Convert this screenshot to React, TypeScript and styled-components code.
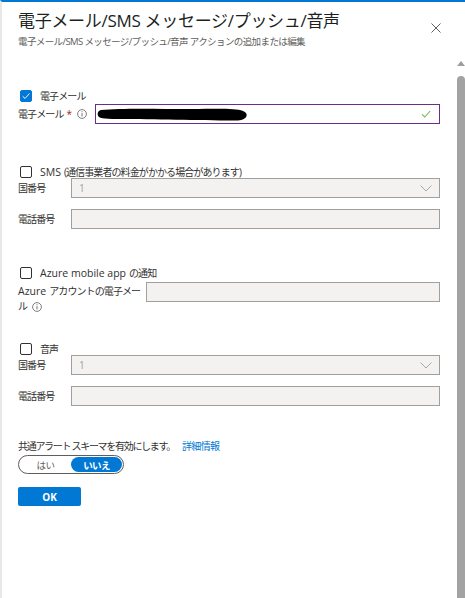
import styled, { createGlobalStyle } from "styled-components";

const GlobalStyle = createGlobalStyle`
  html, body {
    margin: 0;
    padding: 0;
    background: #ffffff;
  }
  body {
    font-family: "Open Sans", "Noto Sans CJK JP", sans-serif;
    color: #323130;
  }
`;

const Panel = styled.div`
  display: flex;
  width: 465px;
  height: 598px;
  box-sizing: border-box;
  border-top: 2px solid #0078d4;
  border-left: 2px solid #e8e8e8;
  overflow: hidden;
`;

const Content = styled.div`
  flex: 1;
  display: flex;
  flex-direction: column;
  padding: 0 17px 0 16px;
`;

const Header = styled.div`
  display: flex;
  justify-content: space-between;
  align-items: flex-start;
  padding-top: 8px;
`;

const Title = styled.h1`
  margin: 0;
  font-size: 17px;
  line-height: 22px;
  font-weight: 400;
  color: #201f1e;
  letter-spacing: -0.3px;
`;

const Subtitle = styled.div`
  font-size: 9.5px;
  line-height: 14px;
  color: #605e5c;
  margin-top: 3px;
  letter-spacing: -0.6px;
`;

const CloseButton = styled.div`
  width: 10px;
  height: 10px;
  margin-top: 6px;
  margin-right: -1px;
`;

const Section = styled.div<{ $top: number }>`
  display: flex;
  flex-direction: column;
  margin-top: ${(p) => p.$top}px;
`;

const CheckRow = styled.label`
  display: flex;
  align-items: center;
  gap: 8px;
  padding-left: 2px;
  font-size: 10px;
  line-height: 14px;
  letter-spacing: -0.9px;
`;

const Latin = styled.span`
  font-size: 10.5px;
  letter-spacing: 0;
  margin-right: 3px;
`;

const Box = styled.span<{ $checked?: boolean }>`
  width: 12px;
  height: 12px;
  box-sizing: border-box;
  border: 1px solid ${(p) => (p.$checked ? "#0078d4" : "#323130")};
  background: ${(p) => (p.$checked ? "#0078d4" : "#ffffff")};
  border-radius: 2px;
  display: flex;
  align-items: center;
  justify-content: center;
`;

const FieldRow = styled.div<{ $label: number; $top: number }>`
  display: grid;
  grid-template-columns: ${(p) => p.$label}px 1fr;
  align-items: center;
  margin-top: ${(p) => p.$top}px;
`;

const FieldRowTop = styled(FieldRow)`
  align-items: start;
`;

const Label = styled.div`
  display: flex;
  align-items: center;
  font-size: 10px;
  line-height: 15px;
  color: #323130;
  letter-spacing: -0.9px;
`;

const Required = styled.span`
  color: #a4262c;
  margin-left: 3px;
  margin-right: 6px;
`;

const Info = styled.span`
  display: inline-flex;
  vertical-align: middle;
  margin-left: 5px;
`;

const TextInput = styled.div<{ $active?: boolean }>`
  position: relative;
  height: 20px;
  box-sizing: border-box;
  border: 1px solid ${(p) => (p.$active ? "#6b2d8c" : "#a19f9d")};
  background: ${(p) => (p.$active ? "#ffffff" : "#f3f2f1")};
  display: flex;
  align-items: center;
  justify-content: space-between;
  padding: 0 7px;
  font-size: 10px;
  color: #a19f9d;
`;

const Redaction = styled.svg`
  position: absolute;
  left: 1px;
  top: 2px;
`;

const Spacer = styled.span``;

const TwoLineLabel = styled.div`
  font-size: 10px;
  line-height: 15px;
  margin-top: 2px;
  letter-spacing: -0.9px;
`;

const Note = styled.div`
  font-size: 10px;
  line-height: 14px;
  letter-spacing: -1.3px;
  margin-top: 33px;
`;

const Link = styled.a`
  color: #0078d4;
  text-decoration: none;
  margin-left: 7px;
  letter-spacing: -0.6px;
`;

const Toggle = styled.div`
  display: flex;
  align-items: center;
  width: 106px;
  height: 19px;
  box-sizing: border-box;
  border: 1px solid #605e5c;
  border-radius: 10px;
  margin-top: 2px;
  padding: 1px;
`;

const ToggleOption = styled.div<{ $selected?: boolean }>`
  flex: 1;
  height: 15px;
  border-radius: 8px;
  display: flex;
  align-items: center;
  justify-content: center;
  font-size: 9.5px;
  letter-spacing: -0.6px;
  font-weight: ${(p) => (p.$selected ? 700 : 400)};
  background: ${(p) => (p.$selected ? "#0078d4" : "transparent")};
  color: ${(p) => (p.$selected ? "#ffffff" : "#605e5c")};
`;

const OkButton = styled.button`
  width: 63px;
  height: 19px;
  margin-top: 13px;
  border: none;
  border-radius: 2px;
  background: #0078d4;
  color: #ffffff;
  font-family: inherit;
  font-weight: 700;
  font-size: 10px;
  padding: 0;
`;

const Scrollbar = styled.div`
  width: 8px;
  display: flex;
  flex-direction: column;
  align-items: center;
  padding-top: 59px;
`;

const ScrollArrow = styled.div`
  width: 0;
  height: 0;
  border-left: 4px solid transparent;
  border-right: 4px solid transparent;
  border-bottom: 5px solid #9e9e9e;
`;

const ScrollThumb = styled.div`
  flex: 1;
  width: 8px;
  margin-top: 10px;
  background: #a3a3a3;
  border-radius: 4px 4px 0 0;
`;

const Check = ({ color, size }: { color: string; size: number }) => (
  <svg width={size} height={size} viewBox="0 0 12 12">
    <path d="M2 6.3 L4.8 9 L10.2 3" fill="none" stroke={color} strokeWidth="1.1" />
  </svg>
);

const InfoIcon = () => (
  <svg width="10" height="10" viewBox="0 0 10 10">
    <circle cx="5" cy="5" r="4.4" fill="none" stroke="#605e5c" strokeWidth="0.8" />
    <path d="M5 4.2 V7.4" stroke="#605e5c" strokeWidth="0.9" />
    <circle cx="5" cy="2.8" r="0.55" fill="#605e5c" />
  </svg>
);

const Chevron = () => (
  <svg width="12" height="7" viewBox="0 0 12 7">
    <path d="M0.5 0.5 L6 6 L11.5 0.5" fill="none" stroke="#a19f9d" strokeWidth="0.9" />
  </svg>
);

const SelectField = ({ top }: { top: number }) => (
  <FieldRow $label={53} $top={top}>
    <Label>国番号</Label>
    <TextInput>
      <span>1</span>
      <Chevron />
    </TextInput>
  </FieldRow>
);

const PhoneField = ({ top }: { top: number }) => (
  <FieldRow $label={53} $top={top}>
    <Label>電話番号</Label>
    <TextInput />
  </FieldRow>
);

export default function App() {
  return (
    <>
      <GlobalStyle />
      <Panel>
        <Content>
          <Header>
            <div>
              <Title>電子メール/SMS メッセージ/プッシュ/音声</Title>
              <Subtitle>電子メール/SMS メッセージ/プッシュ/音声 アクションの追加または編集</Subtitle>
            </div>
            <CloseButton>
              <svg width="10" height="10" viewBox="0 0 10 10">
                <path d="M0.5 0.5 L9.5 9.5 M9.5 0.5 L0.5 9.5" stroke="#605e5c" strokeWidth="1" />
              </svg>
            </CloseButton>
          </Header>

          <Section $top={40}>
            <CheckRow>
              <Box $checked>
                <Check color="#ffffff" size={10} />
              </Box>
              <span>電子メール</span>
            </CheckRow>
            <FieldRow $label={77} $top={1}>
              <Label>
                電子メール<Required>*</Required>
                <InfoIcon />
              </Label>
              <TextInput $active>
                <Redaction width="152" height="15" viewBox="0 0 152 15">
                  <path
                    d="M4 3 C25 1 60 2 95 2 C118 2 138 1 146 4 C152 6 151 13 141 13.5 C112 13.5 62 12.5 30 12 C15 12 5 12 2 10 C0 8 0 4 4 3 Z"
                    fill="#000000"
                  />
                </Redaction>
                <Spacer />
                <Check color="#7ab648" size={12} />
              </TextInput>
            </FieldRow>
          </Section>

          <Section $top={41}>
            <CheckRow>
              <Box />
              <span>
                <Latin>SMS</Latin>(通信事業者の料金がかかる場合があります)
              </span>
            </CheckRow>
            <SelectField top={-1} />
            <PhoneField top={11} />
          </Section>

          <Section $top={37}>
            <CheckRow>
              <Box />
              <span>
                <Latin>Azure mobile app</Latin>の通知
              </span>
            </CheckRow>
            <FieldRowTop $label={128} $top={2}>
              <TwoLineLabel>
                <Latin>Azure</Latin>アカウントの電子メー
                <br />
                ル
                <Info>
                  <InfoIcon />
                </Info>
              </TwoLineLabel>
              <TextInput />
            </FieldRowTop>
          </Section>

          <Section $top={28}>
            <CheckRow>
              <Box />
              <span>音声</span>
            </CheckRow>
            <SelectField top={-1} />
            <PhoneField top={11} />
          </Section>

          <Note>
            共通アラート スキーマを有効にします。
            <Link>詳細情報</Link>
          </Note>
          <Toggle>
            <ToggleOption>はい</ToggleOption>
            <ToggleOption $selected>いいえ</ToggleOption>
          </Toggle>
          <div>
            <OkButton>OK</OkButton>
          </div>
        </Content>
        <Scrollbar>
          <ScrollArrow />
          <ScrollThumb />
        </Scrollbar>
      </Panel>
    </>
  );
}
